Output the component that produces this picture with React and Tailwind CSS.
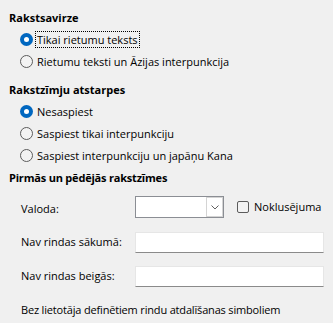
import React from "react";

function Radio({ checked }) {
  if (checked) {
    return (
      <span className="w-[13px] h-[13px] rounded-full bg-[#0067c0] flex items-center justify-center shrink-0">
        <span className="w-[5px] h-[5px] rounded-full bg-white" />
      </span>
    );
  }
  return <span className="w-[13px] h-[13px] rounded-full border border-[#5c5c5c] bg-[#f3f3f3] shrink-0" />;
}

function RadioRow({ checked, focus, children }) {
  return (
    <div className="h-[22px] flex items-center pl-[20px]">
      <Radio checked={checked} />
      <span
        className={
          "ml-[3px] pl-[1px] pr-[1px] leading-[15px] " +
          (focus ? "outline outline-1 outline-dotted outline-black" : "")
        }
      >
        {children}
      </span>
    </div>
  );
}

function Heading({ children, tight }) {
  return (
    <div className={"h-[20px] flex items-center pl-[9px] font-bold " + (tight ? "tracking-[-0.2px]" : "")}>{children}</div>
  );
}

export default function App() {
  return (
    <div className="w-[333px] h-[323px] bg-[#f0f0f0] text-[#000] text-[11px] font-['Open_Sans',sans-serif] overflow-hidden flex flex-col pt-[8px]">
      <Heading>Rakstsavirze</Heading>
      <RadioRow checked focus>Tikai rietumu teksts</RadioRow>
      <RadioRow>Rietumu teksti un Āzijas interpunkcija</RadioRow>
      <div className="h-[8px]" />
      <Heading>Rakstzīmju atstarpes</Heading>
      <RadioRow checked>Nesaspiest</RadioRow>
      <RadioRow>Saspiest tikai interpunkciju</RadioRow>
      <RadioRow>Saspiest interpunkciju un japāņu Kana</RadioRow>
      <div className="h-[2px]" />
      <Heading tight>Pirmās un pēdējās rakstzīmes</Heading>
      <div className="h-[8px]" />
      <div className="h-[22px] flex items-center pl-[21px]">
        <span className="w-[114px] pt-[4px]">Valoda:</span>
        <div className="w-[89px] h-[22px] border border-[#8b8e94] bg-white flex justify-end">
          <div className="w-[17px] h-[20px] border border-[#d4d4d4] bg-white flex items-center justify-center">
            <svg width="8" height="5" viewBox="0 0 8 5" fill="none">
              <path d="M0.5 0.5 L4 4 L7.5 0.5" stroke="#606060" strokeWidth="1" />
            </svg>
          </div>
        </div>
        <span className="ml-[13px] w-[12px] h-[12px] rounded-[2px] border border-[#5c5c5c] bg-[#f3f3f3] shrink-0" />
        <span className="ml-[5px]">Noklusējuma</span>
      </div>
      <div className="h-[13px]" />
      <div className="h-[22px] flex items-center pl-[21px]">
        <span className="w-[114px]">Nav rindas sākumā:</span>
        <div className="w-[189px] h-[21px] bg-white border border-[#e6e6e6] border-b-[#8a8a8a]" />
      </div>
      <div className="h-[12px]" />
      <div className="h-[22px] flex items-center pl-[21px]">
        <span className="w-[114px]">Nav rindas beigās:</span>
        <div className="w-[189px] h-[21px] bg-white border border-[#e6e6e6] border-b-[#8a8a8a]" />
      </div>
      <div className="h-[13px]" />
      <div className="h-[20px] flex items-center pl-[21px] tracking-[-0.17px]">
        Bez lietotāja definētiem rindu atdalīšanas simboliem
      </div>
    </div>
  );
}
